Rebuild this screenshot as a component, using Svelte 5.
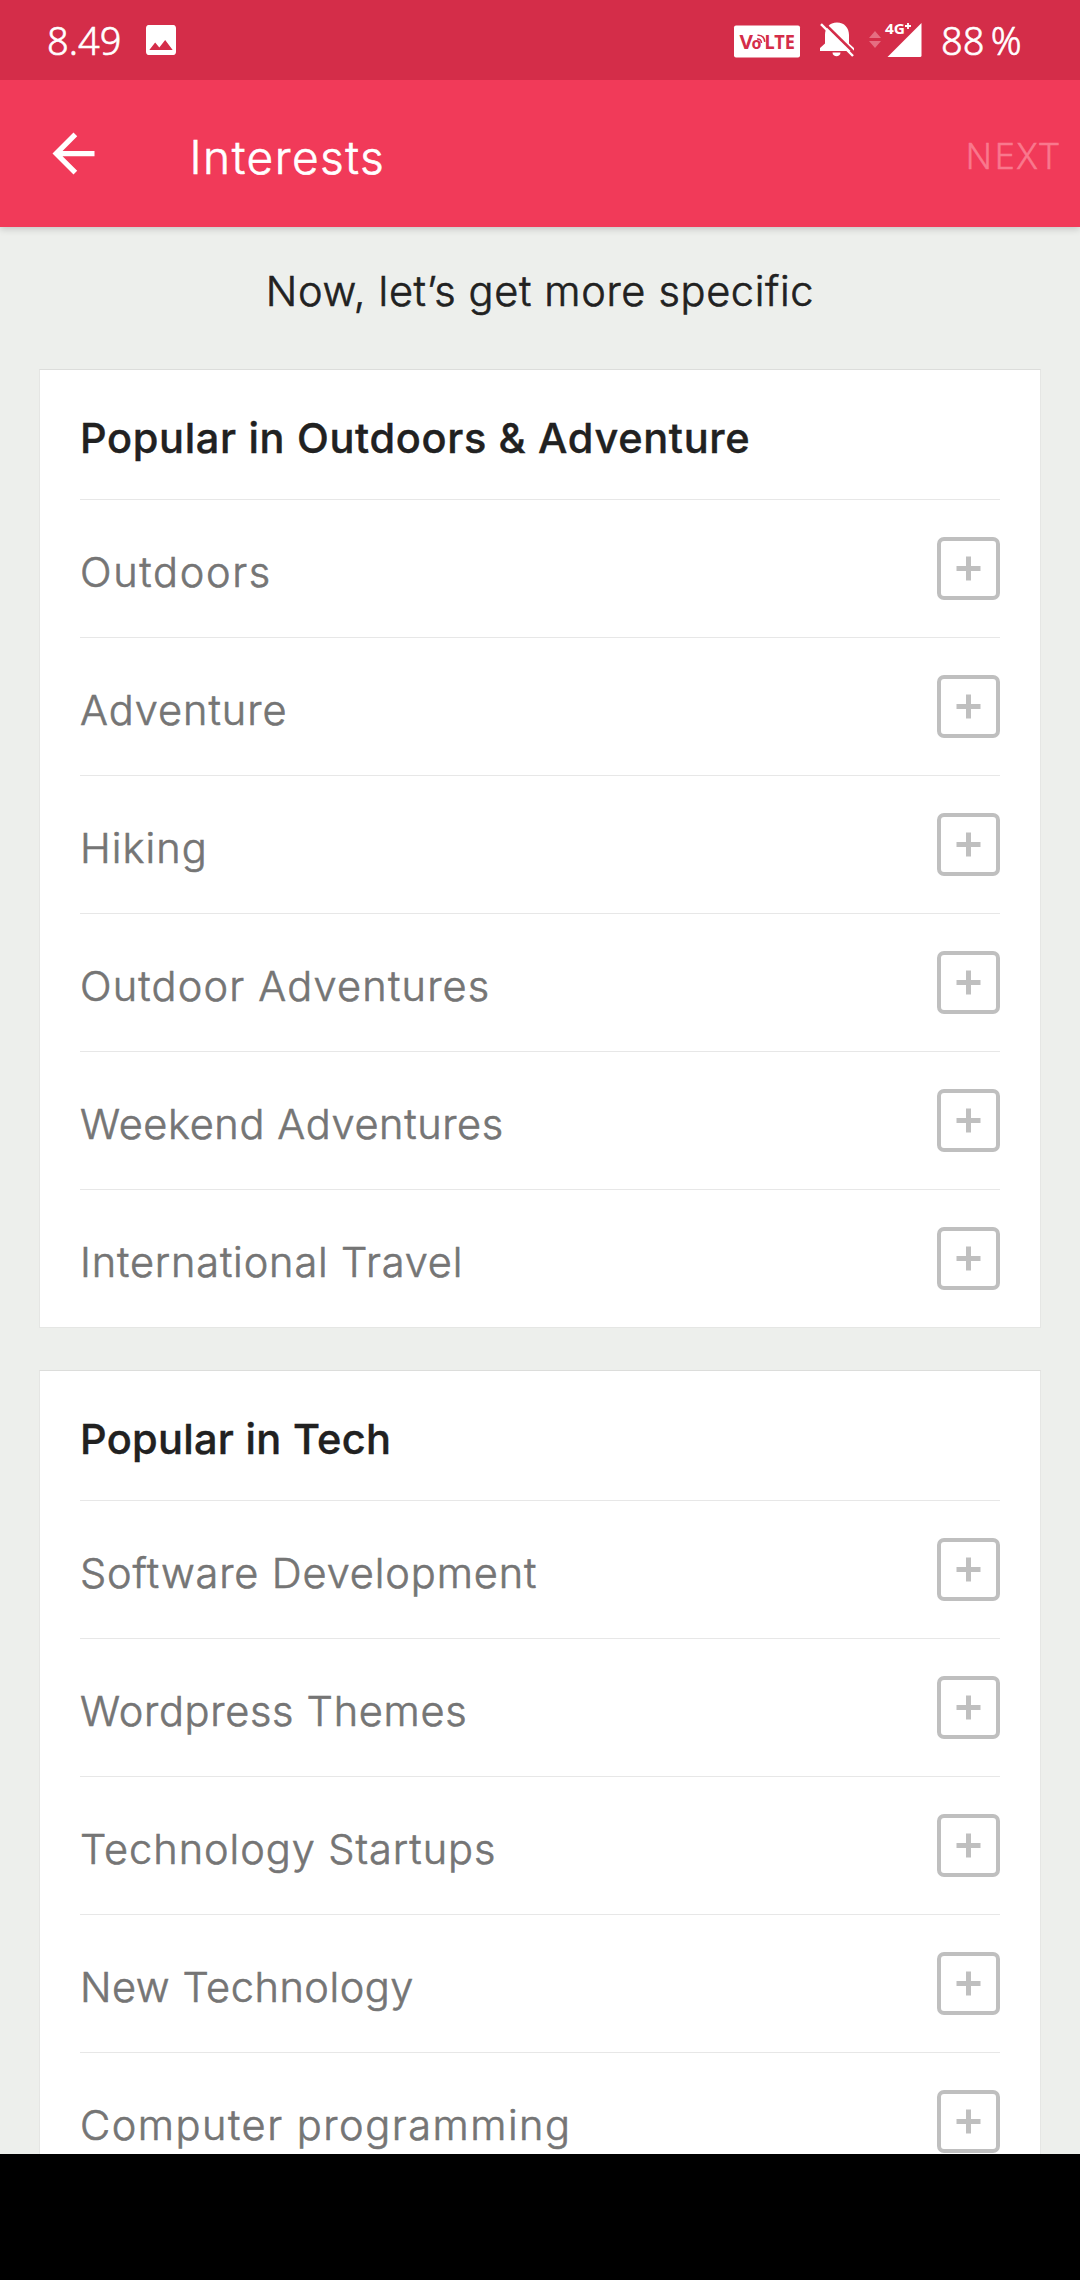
<script>
  // `tracking` is the letter spacing of each text in pixels.
  const groups = [
    {
      title: 'Popular in Outdoors & Adventure',
      tracking: 0.66,
      items: [
        { name: 'Outdoors', tracking: 1.68 },
        { name: 'Adventure', tracking: 0.98 },
        { name: 'Hiking', tracking: 1.05 },
        { name: 'Outdoor Adventures', tracking: 1.2 },
        { name: 'Weekend Adventures', tracking: 0.64 },
        { name: 'International Travel', tracking: 0.85 }
      ]
    },
    {
      title: 'Popular in Tech',
      tracking: 0.3,
      items: [
        { name: 'Software Development', tracking: 0.88 },
        { name: 'Wordpress Themes', tracking: 0.7 },
        { name: 'Technology Startups', tracking: 0.95 },
        { name: 'New Technology', tracking: 0.53 },
        { name: 'Computer programming', tracking: 1.52 }
      ]
    }
  ];
</script>

<div class="screen">
  <div class="status">
    <span class="clock">8.49</span>
    <svg class="photo" viewBox="0 0 24 24" width="40" height="40">
      <path fill="#fff" d="M21 19V5c0-1.1-.6-2-1.500-2H4.500C3.600 3 3 3.900 3 5v14c0 1.100.6 2 1.500 2h15c.9 0 1.500-.9 1.500-2zM8.500 13.500l2.500 3.010L14.500 12l4.500 6H5l3.500-4.500z" />
    </svg>
    <svg class="indicators" viewBox="730 0 200 80" width="200" height="80">
      <rect x="734" y="25.500" width="66" height="32" rx="2" fill="#fff" />
      <g class="volte">
        <text x="739.500" y="49" font-size="19" textLength="13.500" lengthAdjust="spacingAndGlyphs">V</text>
        <text x="751.500" y="49" font-size="15.500" textLength="10" lengthAdjust="spacingAndGlyphs">o</text>
        <text x="764.500" y="49" font-size="19" textLength="30.500" lengthAdjust="spacingAndGlyphs">LTE</text>
      </g>
      <path d="M757 39q4-.5 4.500 4M757.500 35.300q6.500-.5 7.300 6.500" fill="none" stroke="#d42d49" stroke-width="1.600" />
      <path fill="#fff" d="M837 22.500c-7.500 0-12 5.500-12 12.500v8.500l-5 4.500v3h34v-3l-5-4.500V35c0-7-4.500-12.500-12-12.500zM832.500 52.500h8c0 5-8 5-8 0z" />
      <path d="M823.500 22.500L855 53.500" stroke="#d42d49" stroke-width="2.500" />
      <path d="M821 24.200L853 56" stroke="#fff" stroke-width="2.400" />
      <path fill="#e56e82" d="M869 38l6-7 6 7zM869 41h12l-6 7z" />
      <path fill="#fff" d="M887.500 57L921.500 23V55.500q0 1.500-1.500 1.500z" />
      <text class="net" x="885" y="33.800" font-size="14.500" textLength="20" lengthAdjust="spacingAndGlyphs">4G</text>
      <path d="M905 26h6M908 23v6" stroke="#fff" stroke-width="1.800" />
    </svg>
    <span class="battery">88&#8201;%</span>
  </div>

  <header class="bar">
    <svg class="back" viewBox="0 0 24 24" width="63" height="63">
      <path fill="#fff" d="M20 11H7.830l5.590-5.590L12 4l-8 8 8 8 1.410-1.410L7.830 13H20v-2z" />
    </svg>
    <h1>Interests</h1>
    <span class="next">NEXT</span>
  </header>

  <main>
    <p class="lead">Now, let’s get more specific</p>
    {#each groups as group}
      <section class="card">
        <h2 style:letter-spacing="{group.tracking}px">{group.title}</h2>
        {#each group.items as item}
          <div class="row">
            <span class="label" style:letter-spacing="{item.tracking}px">{item.name}</span>
            <button class="add" aria-label="Add {item.name}">
              <svg viewBox="0 0 25 25" width="25" height="25">
                <path d="M12.500 0.500v24M0.500 12.500h24" stroke="#bfbfbf" stroke-width="5" />
              </svg>
            </button>
          </div>
        {/each}
      </section>
    {/each}
  </main>

  <div class="navbar"></div>
</div>

<style>
  :global(body) {
    margin: 0;
    background: #000;
  }
  .screen {
    width: 1080px;
    height: 2280px;
    overflow: hidden;
    display: flex;
    flex-direction: column;
    background: #000;
    font-family: Inter, 'Open Sans', sans-serif;
    font-size: 41.500px;
    font-weight: 300;
  }
  /* A hairline outline puts the light weight between light and regular. */
  .clock,
  .battery,
  .next,
  .lead,
  .label,
  h1 {
    -webkit-text-stroke: 0.600px currentColor;
  }
  .status {
    flex: none;
    z-index: 2;
    height: 80px;
    box-sizing: border-box;
    padding-left: 47px;
    display: flex;
    align-items: center;
    background: #d42d49;
    color: #fff;
    font-family: 'Noto Sans', sans-serif;
    font-size: 38px;
    font-weight: 300;
    line-height: 80px;
    white-space: nowrap;
  }
  .clock {
    width: 94px;
  }
  .photo {
    flex: none;
  }
  .indicators {
    flex: none;
    margin-left: 549px;
  }
  .battery {
    margin-left: 11px;
  }
  .volte {
    fill: #d42d49;
    font-family: 'Noto Sans', sans-serif;
    font-weight: 700;
  }
  .net {
    fill: #fff;
    font-family: 'Noto Sans', sans-serif;
    font-weight: 700;
  }
  .bar {
    flex: none;
    height: 147px;
    box-sizing: border-box;
    padding: 0 19px 0 42px;
    display: flex;
    align-items: center;
    background: #f13a59;
    color: #fff;
    box-shadow: 0 2px 7px rgba(0, 0, 0, 0.18);
    z-index: 1;
  }
  .back {
    flex: none;
  }
  h1 {
    margin: 6px 0 0 84.500px;
    font-size: 46px;
    font-weight: 300;
    letter-spacing: 1.500px;
    line-height: 60px;
  }
  .next {
    margin: 3px 0 0 auto;
    font-family: 'Noto Sans', sans-serif;
    font-size: 36.500px;
    letter-spacing: 2.300px;
    line-height: 50px;
    color: #f9788d;
  }
  main {
    height: 1927px;
    flex: none;
    overflow: hidden;
    background: #edefec;
    display: flex;
    flex-direction: column;
  }
  .lead {
    flex: none;
    margin: 0;
    height: 142px;
    box-sizing: border-box;
    padding-top: 34px;
    line-height: 60px;
    letter-spacing: 0.660px;
    text-align: center;
    color: #212121;
  }
  .card {
    flex: none;
    margin: 0 39px 42px;
    padding: 0 40px;
    border: 1px solid #e5e6e4;
    border-top-color: #dcdddb;
    background: #fff;
  }
  h2 {
    margin: 0;
    height: 129px;
    line-height: 137px;
    font-size: 41.500px;
    font-weight: 500;
    -webkit-text-stroke: 0.400px currentColor;
    color: #212121;
    white-space: nowrap;
  }
  .row {
    height: 137px;
    border-top: 1px solid #e7e7e7;
    display: flex;
    align-items: center;
    justify-content: space-between;
  }
  .label {
    padding-top: 6px;
    color: #757575;
    white-space: nowrap;
  }
  .add {
    width: 63px;
    height: 63px;
    box-sizing: border-box;
    padding: 0;
    border: 4px solid #bfbfbf;
    border-radius: 7px;
    background: none;
    display: flex;
    align-items: center;
    justify-content: center;
  }
  .navbar {
    flex: 1;
    background: #000;
  }
</style>
